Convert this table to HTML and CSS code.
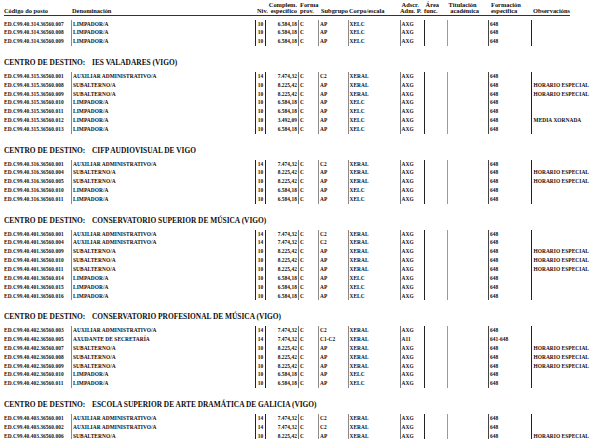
FILE: index.html
```html
<!DOCTYPE html>
<html lang="gl">
<head>
<meta charset="utf-8">
<title>Postos</title>
<link rel="stylesheet" href="styles.css">
</head>
<body>
<div class="page">
  <div class="thead">
    <div class="hc"><span></span><span>Código do posto</span></div>
    <div class="hc"><span></span><span>Denominación</span></div>
    <div class="hc hniv"><span></span><span>Niv.</span></div>
    <div class="hc hcomp"><span>Complem.</span><span>específico</span></div>
    <div class="hc hforma"><span>Forma</span><span>prov.</span></div>
    <div class="hc hsub"><span></span><span>Subgrupo</span></div>
    <div class="hc hcorpo"><span></span><span>Corpo/escala</span></div>
    <div class="hc hadscr"><span>&nbsp;Adscr.</span><span>Adm. P.</span></div>
    <div class="hc harea"><span>&nbsp;Área</span><span>func.</span></div>
    <div class="hc htit"><span>&nbsp;Titulación</span><span>&nbsp;&nbsp;académica</span></div>
    <div class="hc hform"><span>Formación</span><span>específica</span></div>
    <div class="hc hobs"><span></span><span>Observacións</span></div>
  </div>

  <div class="group first">
    <div class="row"><span>ED.C99.40.314.36560.007</span><span>LIMPADOR/A</span><span class="niv">10</span><span class="num">6.584,18</span><span>C</span><span>AP</span><span>XELC</span><span>AXG</span><span></span><span></span><span>648</span><span></span></div>
    <div class="row"><span>ED.C99.40.314.36560.008</span><span>LIMPADOR/A</span><span class="niv">10</span><span class="num">6.584,18</span><span>C</span><span>AP</span><span>XELC</span><span>AXG</span><span></span><span></span><span>648</span><span></span></div>
    <div class="row"><span>ED.C99.40.314.36560.009</span><span>LIMPADOR/A</span><span class="niv">10</span><span class="num">6.584,18</span><span>C</span><span>AP</span><span>XELC</span><span>AXG</span><span></span><span></span><span>648</span><span></span></div>
  </div>

  <div class="section">
    <div class="sec-title"><span class="lbl">CENTRO DE DESTINO:</span><span class="name">IES VALADARES (VIGO)</span></div>
    <div class="group">
      <div class="row"><span>ED.C99.40.315.36560.001</span><span>AUXILIAR ADMINISTRATIVO/A</span><span class="niv">14</span><span class="num">7.474,32</span><span>C</span><span>C2</span><span>XERAL</span><span>AXG</span><span></span><span></span><span>648</span><span></span></div>
      <div class="row"><span>ED.C99.40.315.36560.008</span><span>SUBALTERNO/A</span><span class="niv">10</span><span class="num">8.225,42</span><span>C</span><span>AP</span><span>XERAL</span><span>AXG</span><span></span><span></span><span>648</span><span>HORARIO ESPECIAL</span></div>
      <div class="row"><span>ED.C99.40.315.36560.009</span><span>SUBALTERNO/A</span><span class="niv">10</span><span class="num">8.225,42</span><span>C</span><span>AP</span><span>XERAL</span><span>AXG</span><span></span><span></span><span>648</span><span>HORARIO ESPECIAL</span></div>
      <div class="row"><span>ED.C99.40.315.36560.010</span><span>LIMPADOR/A</span><span class="niv">10</span><span class="num">6.584,18</span><span>C</span><span>AP</span><span>XELC</span><span>AXG</span><span></span><span></span><span>648</span><span></span></div>
      <div class="row"><span>ED.C99.40.315.36560.011</span><span>LIMPADOR/A</span><span class="niv">10</span><span class="num">6.584,18</span><span>C</span><span>AP</span><span>XELC</span><span>AXG</span><span></span><span></span><span>648</span><span></span></div>
      <div class="row"><span>ED.C99.40.315.36560.012</span><span>LIMPADOR/A</span><span class="niv">10</span><span class="num">3.492,09</span><span>C</span><span>AP</span><span>XELC</span><span>AXG</span><span></span><span></span><span>648</span><span>MEDIA XORNADA</span></div>
      <div class="row"><span>ED.C99.40.315.36560.013</span><span>LIMPADOR/A</span><span class="niv">10</span><span class="num">6.584,18</span><span>C</span><span>AP</span><span>XELC</span><span>AXG</span><span></span><span></span><span>648</span><span></span></div>
    </div>
  </div>

  <div class="section">
    <div class="sec-title"><span class="lbl">CENTRO DE DESTINO:</span><span class="name">CIFP AUDIOVISUAL DE VIGO</span></div>
    <div class="group">
      <div class="row"><span>ED.C99.40.316.36560.001</span><span>AUXILIAR ADMINISTRATIVO/A</span><span class="niv">14</span><span class="num">7.474,32</span><span>C</span><span>C2</span><span>XERAL</span><span>AXG</span><span></span><span></span><span>648</span><span></span></div>
      <div class="row"><span>ED.C99.40.316.36560.004</span><span>SUBALTERNO/A</span><span class="niv">10</span><span class="num">8.225,42</span><span>C</span><span>AP</span><span>XERAL</span><span>AXG</span><span></span><span></span><span>648</span><span>HORARIO ESPECIAL</span></div>
      <div class="row"><span>ED.C99.40.316.36560.005</span><span>SUBALTERNO/A</span><span class="niv">10</span><span class="num">8.225,42</span><span>C</span><span>AP</span><span>XERAL</span><span>AXG</span><span></span><span></span><span>648</span><span>HORARIO ESPECIAL</span></div>
      <div class="row"><span>ED.C99.40.316.36560.010</span><span>LIMPADOR/A</span><span class="niv">10</span><span class="num">6.584,18</span><span>C</span><span>AP</span><span>XELC</span><span>AXG</span><span></span><span></span><span>648</span><span></span></div>
      <div class="row"><span>ED.C99.40.316.36560.011</span><span>LIMPADOR/A</span><span class="niv">10</span><span class="num">6.584,18</span><span>C</span><span>AP</span><span>XELC</span><span>AXG</span><span></span><span></span><span>648</span><span></span></div>
    </div>
  </div>

  <div class="section">
    <div class="sec-title"><span class="lbl">CENTRO DE DESTINO:</span><span class="name">CONSERVATORIO SUPERIOR DE MÚSICA (VIGO)</span></div>
    <div class="group">
      <div class="row"><span>ED.C99.40.401.36560.001</span><span>AUXILIAR ADMINISTRATIVO/A</span><span class="niv">14</span><span class="num">7.474,32</span><span>C</span><span>C2</span><span>XERAL</span><span>AXG</span><span></span><span></span><span>648</span><span></span></div>
      <div class="row"><span>ED.C99.40.401.36560.004</span><span>AUXILIAR ADMINISTRATIVO/A</span><span class="niv">14</span><span class="num">7.474,32</span><span>C</span><span>C2</span><span>XERAL</span><span>AXG</span><span></span><span></span><span>648</span><span></span></div>
      <div class="row"><span>ED.C99.40.401.36560.009</span><span>SUBALTERNO/A</span><span class="niv">10</span><span class="num">8.225,42</span><span>C</span><span>AP</span><span>XERAL</span><span>AXG</span><span></span><span></span><span>648</span><span>HORARIO ESPECIAL</span></div>
      <div class="row"><span>ED.C99.40.401.36560.010</span><span>SUBALTERNO/A</span><span class="niv">10</span><span class="num">8.225,42</span><span>C</span><span>AP</span><span>XERAL</span><span>AXG</span><span></span><span></span><span>648</span><span>HORARIO ESPECIAL</span></div>
      <div class="row"><span>ED.C99.40.401.36560.011</span><span>SUBALTERNO/A</span><span class="niv">10</span><span class="num">8.225,42</span><span>C</span><span>AP</span><span>XERAL</span><span>AXG</span><span></span><span></span><span>648</span><span>HORARIO ESPECIAL</span></div>
      <div class="row"><span>ED.C99.40.401.36560.014</span><span>LIMPADOR/A</span><span class="niv">10</span><span class="num">6.584,18</span><span>C</span><span>AP</span><span>XELC</span><span>AXG</span><span></span><span></span><span>648</span><span></span></div>
      <div class="row"><span>ED.C99.40.401.36560.015</span><span>LIMPADOR/A</span><span class="niv">10</span><span class="num">6.584,18</span><span>C</span><span>AP</span><span>XELC</span><span>AXG</span><span></span><span></span><span>648</span><span></span></div>
      <div class="row"><span>ED.C99.40.401.36560.016</span><span>LIMPADOR/A</span><span class="niv">10</span><span class="num">6.584,18</span><span>C</span><span>AP</span><span>XELC</span><span>AXG</span><span></span><span></span><span>648</span><span></span></div>
    </div>
  </div>

  <div class="section">
    <div class="sec-title"><span class="lbl">CENTRO DE DESTINO:</span><span class="name">CONSERVATORIO PROFESIONAL DE MÚSICA (VIGO)</span></div>
    <div class="group">
      <div class="row"><span>ED.C99.40.402.36560.003</span><span>AUXILIAR ADMINISTRATIVO/A</span><span class="niv">14</span><span class="num">7.474,32</span><span>C</span><span>C2</span><span>XERAL</span><span>AXG</span><span></span><span></span><span>648</span><span></span></div>
      <div class="row"><span>ED.C99.40.402.36560.005</span><span>AXUDANTE DE SECRETARÍA</span><span class="niv">14</span><span class="num">7.474,32</span><span>C</span><span>C1-C2</span><span>XERAL</span><span>A11</span><span></span><span></span><span>641-648</span><span></span></div>
      <div class="row"><span>ED.C99.40.402.36560.007</span><span>SUBALTERNO/A</span><span class="niv">10</span><span class="num">8.225,42</span><span>C</span><span>AP</span><span>XERAL</span><span>AXG</span><span></span><span></span><span>648</span><span>HORARIO ESPECIAL</span></div>
      <div class="row"><span>ED.C99.40.402.36560.008</span><span>SUBALTERNO/A</span><span class="niv">10</span><span class="num">8.225,42</span><span>C</span><span>AP</span><span>XERAL</span><span>AXG</span><span></span><span></span><span>648</span><span>HORARIO ESPECIAL</span></div>
      <div class="row"><span>ED.C99.40.402.36560.009</span><span>SUBALTERNO/A</span><span class="niv">10</span><span class="num">8.225,42</span><span>C</span><span>AP</span><span>XERAL</span><span>AXG</span><span></span><span></span><span>648</span><span>HORARIO ESPECIAL</span></div>
      <div class="row"><span>ED.C99.40.402.36560.010</span><span>LIMPADOR/A</span><span class="niv">10</span><span class="num">6.584,18</span><span>C</span><span>AP</span><span>XELC</span><span>AXG</span><span></span><span></span><span>648</span><span></span></div>
      <div class="row"><span>ED.C99.40.402.36560.011</span><span>LIMPADOR/A</span><span class="niv">10</span><span class="num">6.584,18</span><span>C</span><span>AP</span><span>XELC</span><span>AXG</span><span></span><span></span><span>648</span><span></span></div>
    </div>
  </div>

  <div class="section">
    <div class="sec-title"><span class="lbl">CENTRO DE DESTINO:</span><span class="name">ESCOLA SUPERIOR DE ARTE DRAMÁTICA DE GALICIA (VIGO)</span></div>
    <div class="group">
      <div class="row"><span>ED.C99.40.403.36560.001</span><span>AUXILIAR ADMINISTRATIVO/A</span><span class="niv">14</span><span class="num">7.474,32</span><span>C</span><span>C2</span><span>XERAL</span><span>AXG</span><span></span><span></span><span>648</span><span></span></div>
      <div class="row"><span>ED.C99.40.403.36560.002</span><span>AUXILIAR ADMINISTRATIVO/A</span><span class="niv">14</span><span class="num">7.474,32</span><span>C</span><span>C2</span><span>XERAL</span><span>AXG</span><span></span><span></span><span>648</span><span></span></div>
      <div class="row"><span>ED.C99.40.403.36560.006</span><span>SUBALTERNO/A</span><span class="niv">10</span><span class="num">8.225,42</span><span>C</span><span>AP</span><span>XERAL</span><span>AXG</span><span></span><span></span><span>648</span><span>HORARIO ESPECIAL</span></div>
    </div>
  </div>
</div>
</body>
</html>
```

FILE: styles.css
```css
html, body {
  margin: 0;
  padding: 0;
  background: #ffffff;
}

body {
  font-family: "Liberation Serif", "Times New Roman", serif;
  font-weight: bold;
  color: #0d0d0d;
  width: 615px;
  height: 439px;
  overflow: hidden;
}

.page {
  padding: 0 0 0 4px;
}

/* shared column grid */
.thead,
.row {
  display: grid;
  grid-template-columns: 67px 184px 10px 33px 20px 30px 52px 24px 23px 41px 43px 1fr;
}

/* ---------- table header ---------- */
.thead {
  margin-right: 45px;
  padding-top: 1.5px;
  border-bottom: 1px solid #333333;
  margin-bottom: 3.6px;
  font-size: 6.4px;
  line-height: 6.75px;
}

.hc {
  display: flex;
  flex-direction: column;
  white-space: nowrap;
}

.hc span {
  display: block;
  height: 6.75px;
}

.hc:nth-child(2) { padding-left: 1px; }
.hniv { padding-left: 2px; }
.hcomp { align-items: flex-end; padding-right: 1px; }
.hforma { padding-left: 2px; }
.hsub { padding-left: 3px; }
.hcorpo { padding-left: 1px; }
.hform { padding-left: 3px; }
.hobs { padding-left: 2px; }

/* ---------- data ---------- */
.row {
  height: 8.85px;
  line-height: 8.85px;
  font-size: 5.4px;
  letter-spacing: 0.05px;
  white-space: nowrap;
}

.row > span {
  display: block;
}

.row > span:nth-child(n+2) {
  border-left: 1px solid #333333;
  padding-left: 1px;
}

.row > span:nth-child(2) { border-left-color: #8a8a8a; }
.row > span:nth-child(5) { border-left-color: #777777; }
.row > span:nth-child(6) { border-left-color: #8a8a8a; }
.row > span:nth-child(7) { border-left-color: #8a8a8a; padding-left: 0.5px; }
.row > span:nth-child(8) { border-left-color: #777777; padding-left: 0.5px; }
.row > span:nth-child(9) { border-left-color: #222222; }
.row > span:nth-child(10) { border-left-color: #9a9a9a; }
.row > span:nth-child(11) { border-left-color: #444444; }
.row > span:nth-child(12) { border-left-color: #222222; padding-left: 1.5px; }

.row > span.niv {
  text-align: center;
  padding-left: 0;
  border-left-color: #222222;
}

.row > span.num {
  text-align: right;
  padding-left: 0;
  padding-right: 1px;
  border-left-color: #222222;
}

/* ---------- sections ---------- */
.section {
  margin-top: 10.8px;
}

.sec-title {
  height: 12px;
  line-height: 12px;
  padding-bottom: 3px;
  font-size: 7.4px;
  white-space: nowrap;
}

.sec-title .lbl {
  display: inline-block;
  width: 88px;
}
```
